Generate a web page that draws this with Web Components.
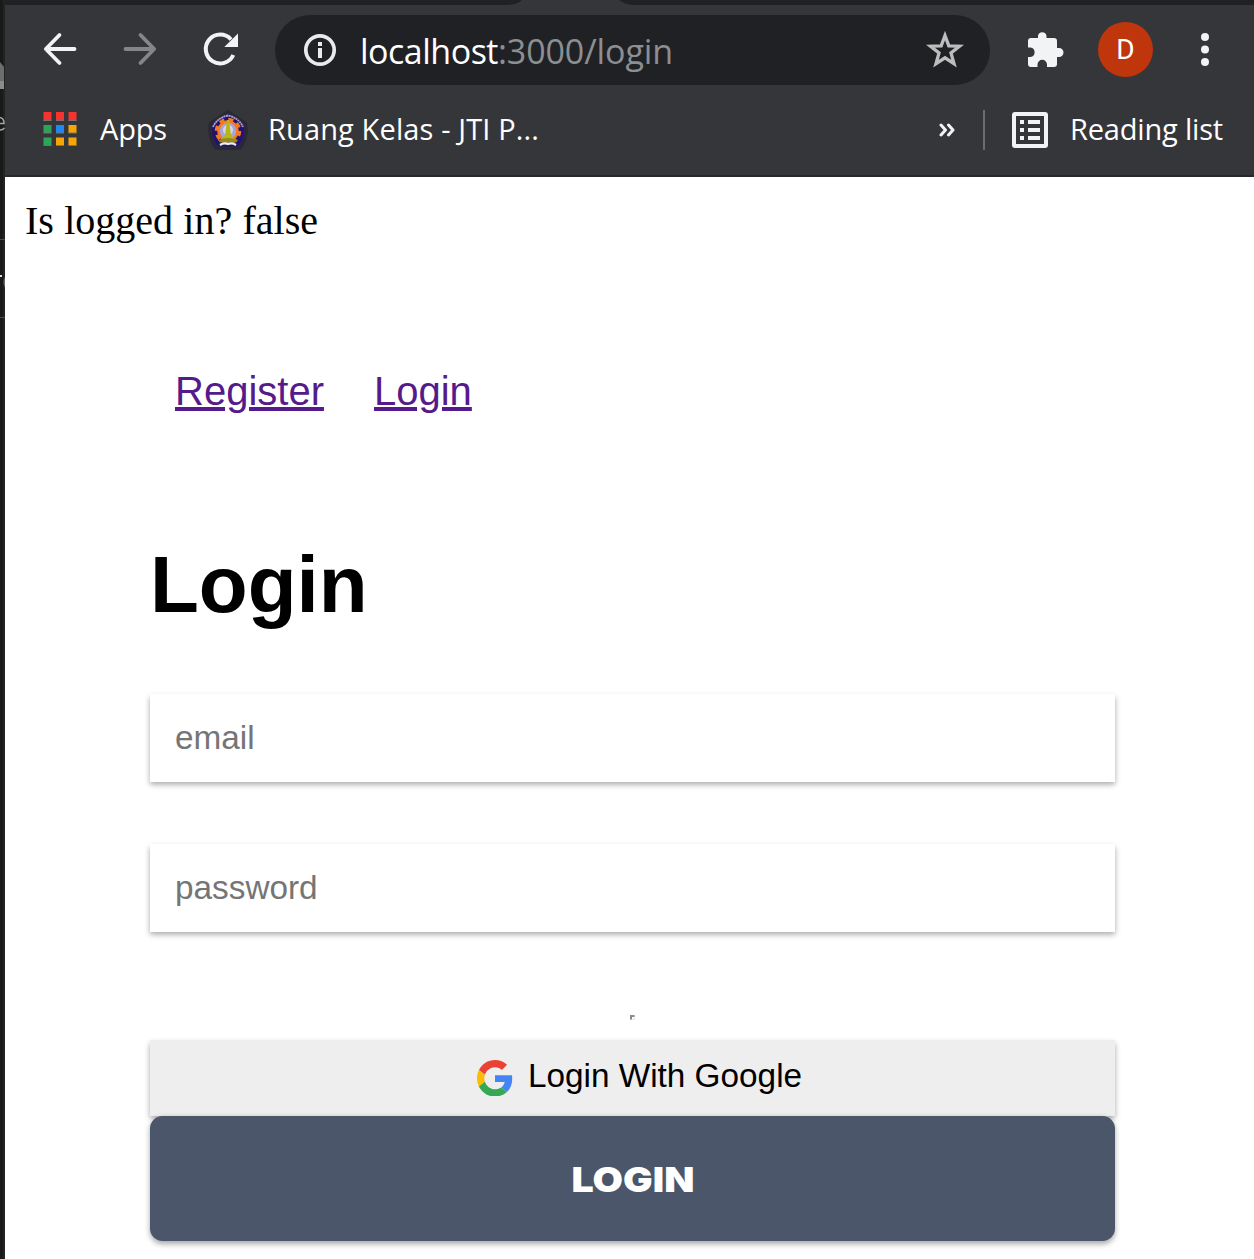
<!DOCTYPE html>
<html lang="en">
<head>
<meta charset="utf-8">
<title>Login</title>
<style>
body{margin:0;background:#fff;overflow:hidden}
</style>
</head>
<body>
<browser-window>
  <browser-toolbar slot="chrome"></browser-toolbar>
  <bookmarks-bar slot="chrome"></bookmarks-bar>
  <login-page></login-page>
</browser-window>
<script>
class BaseElement extends HTMLElement {
  constructor() {
    super();
    this.attachShadow({ mode: 'open' }).innerHTML = this.constructor.markup;
  }
}

// Label whose tracking is spread to fill the width given in its "width" attribute.
class FitLabel extends BaseElement {
  static markup = `<style>
    :host{display:block;flex:none;white-space:pre;font-family:"Open Sans","Noto Sans",sans-serif}
    span{display:inline-block}
  </style><span><slot></slot></span>`;
  connectedCallback() {
    const target = Number(this.getAttribute('width'));
    const span = this.shadowRoot.querySelector('span');
    const natural = span.getBoundingClientRect().width;
    span.style.letterSpacing = ((target - natural) / this.textContent.length).toFixed(3) + 'px';
    this.style.width = target + 'px';
  }
}

class DesktopEdge extends BaseElement {
  static markup = `<style>
    :host{display:block;width:5px;flex:none;height:1259px;overflow:hidden;background:#1c1c1c}
    svg{display:block}
  </style>
  <svg width="5" height="1259">
    <rect width="3" height="1259" fill="#191919"/><rect x="3" width="2" height="1259" fill="#232323"/>
    <path d="M0 62L4 67V89H0z" fill="#6d6d6d"/><path d="M0 81H4V89H0z" fill="#8b8b8b"/>
    <path d="M0 117.500Q4 118 4 123.500H0M0 130Q3 130 4.500 128" fill="none" stroke="#a5a5a5" stroke-width="1.500"/>
    <path d="M0 239.500H5M0 317.500H5" stroke="#4b4b4b"/>
    <rect y="275" width="2" height="2" fill="#ddd"/><path d="M5 277Q2 282 5 288" fill="#666"/>
  </svg>`;
}

class BrowserWindow extends BaseElement {
  static markup = `<style>
    :host{display:flex;width:1254px;height:1259px;overflow:hidden}
    .win{width:1249px;display:flex;flex-direction:column}
    .chrome{background:#35363a;border-bottom:2px solid #28292c;height:175px;flex:none}
    .tabs{display:block;height:5px}
  </style>
  <desktop-edge></desktop-edge>
  <div class="win">
    <div class="chrome">
      <svg class="tabs" width="1249" height="5"><path d="M0 0H517Q512 5 502 5H0zM614 0Q620 5 630 5H1249V0z" fill="#202124"/></svg>
      <slot name="chrome"></slot>
    </div>
    <slot></slot>
  </div>`;
}

class BrowserToolbar extends BaseElement {
  static markup = `<style>
    :host{display:flex;height:90px;align-items:center;box-sizing:border-box;padding-left:35px}
    svg{display:block;flex:none}
    .nav{margin-right:30px}
    .omni{display:flex;align-items:center;width:715px;height:70px;border-radius:35px;background:#202124;box-sizing:border-box;padding:0 25px;margin-right:30px}
    .omni .info{margin:0 20px 0 0}
    .star{margin:0 0 0 auto}
    .url{font-size:34px;line-height:46px;color:#fff;padding-top:1px}
    .path{color:#8c8f91}
    .face{width:55px;height:55px;border-radius:50%;background:#bf360c;color:#fff;font:28px/55px Roboto,sans-serif;text-align:center;margin:-1px 27px 0 28px}
  </style>
  <svg class="nav" width="50" height="50" fill="none" stroke="#f1f3f4" stroke-width="3.800"><path d="M34.500 24H6M19.500 10L5.800 24L19.500 38" stroke-linecap="round" stroke-linejoin="round"/></svg>
  <svg class="nav" width="50" height="50" fill="none" stroke="#85868a" stroke-width="3.800"><path d="M5.500 24H34M20.500 10L34.200 24L20.500 38" stroke-linecap="round" stroke-linejoin="round"/></svg>
  <svg width="50" height="50" style="margin-right:25px"><path d="M33.300 30A14.400 14.400 0 1 1 31 14.500" fill="none" stroke="#f1f3f4" stroke-width="4"/><path d="M38 8.500V22H24.300z" fill="#f1f3f4"/></svg>
  <div class="omni">
    <svg class="info" width="40" height="40"><circle cx="20" cy="20" r="14.200" fill="none" stroke="#e8eaed" stroke-width="3.700"/><path d="M18 12h4v4h-4zM18 18h4v10h-4z" fill="#e8eaed"/></svg>
    <fit-label class="url" width="138">localhost</fit-label><fit-label class="url path" width="175">:3000/login</fit-label>
    <svg class="star" width="40" height="40"><path d="M20 5.500L23.800 15.800L34.500 16.200L26 22.900L29 33.700L20 27.800L11 33.700L14 22.900L5.500 16.200L16.200 15.800z" fill="none" stroke="#bdbdbd" stroke-width="3.300"/></svg>
  </div>
  <svg width="50" height="50" viewBox="0 0 50 50" style="margin-right:0"><path d="M11 13H18V11A4.300 4.300 0 0 1 26.500 11V13H34Q37 13 37 16V23H39A4.500 4.500 0 0 1 39 32H37V39Q37 42 34 42H27V39.500A4.700 4.700 0 0 0 17.500 39.500V42H11Q8 42 8 39V32H10.500A4.800 4.800 0 0 0 10.500 22.500H8V16Q8 13 11 13z" fill="#f1f3f4"/></svg>
  <div class="face">D</div>
  <svg width="50" height="50" fill="#f1f3f4"><circle cx="25" cy="12" r="4"/><circle cx="25" cy="24.500" r="4"/><circle cx="25" cy="37" r="4"/></svg>`;
}

class BookmarksBar extends BaseElement {
  static markup = `<style>
    :host{display:flex;align-items:center;height:70px;padding-left:38px;color:#fff;font-size:29px;line-height:38px}
    svg{display:block;flex:none}
    fit-label{padding-bottom:2px}
    .sep{width:2px;height:40px;background:#6b6c6f;margin:0 27px}
  </style>
  <svg width="34" height="35" style="margin:-1px 23px 0 0">
    <path d="M0.500 0h8v9h-8zM13 0h8v9h-8zM25.500 0h8v9h-8z" fill="#f7322f"/>
    <path d="M.5 13h8v8h-8zM.5 25.500h8v8h-8z" fill="#2ea35a"/><path d="M13 13h8v8h-8z" fill="#1e88f5"/>
    <path d="M25.500 13h8v8h-8zM13 25.500h8v8h-8zM25.500 25.500h8v8h-8z" fill="#f5a606"/>
    <path d="M.5 8.500h8M13 8.500h8M25.500 8.500h8M.5 21h8M13 21h8M25.500 21h8M.5 33.500h8M13 33.500h8M25.500 33.500h8" stroke="#77706c"/>
  </svg>
  <fit-label width="67">Apps</fit-label>
  <svg width="40" height="40" viewBox="0 0 40 40" style="margin:0 20px 0 41px">
    <path d="M20 1L38 13Q41 25 33 38Q20 41 7 38Q-1 25 2 13z" fill="#28264b" stroke="#2b292f" stroke-width="2"/>
    <path d="M20 4L35 14Q38 25 31 35Q20 38 9 35Q2 25 5 14z" fill="#25116f"/>
    <path d="M5 17Q9 8 20 5.500Q31 8 35 17" fill="none" stroke="#aaa4cb" stroke-width="1.800" stroke-dasharray="2 .5"/>
    <circle cx="20" cy="21" r="11.500" fill="none" stroke="#f37a20" stroke-width="3.500" stroke-dasharray="5 4.030"/>
    <circle cx="20" cy="21" r="9.500" fill="#aaa3d7" stroke="#f37a20" stroke-width="2.500"/>
    <circle cx="20" cy="20" r="5" fill="#d7d5ee"/>
    <path d="M19 10h2l2 15 4 4H13l4-4z" fill="#b7b719"/><path d="M10 30Q20 26 30 30L28 32.500H12z" fill="#948a20"/>
    <path d="M12 35Q16 32.500 20 34Q24 32.500 28 35" fill="none" stroke="#eee" stroke-width="2.300"/>
  </svg>
  <fit-label width="271">Ruang Kelas - JTI P...</fit-label>
  <svg width="18" height="16" style="margin:-1px 0 0 400px" fill="none" stroke="#f1f3f4" stroke-width="3"><path d="M2 3L6.500 8L2 13M9.500 3L14 8L9.500 13" stroke-linecap="round" stroke-linejoin="round"/></svg>
  <div class="sep" style="margin-left:26px"></div>
  <svg width="36" height="36" style="margin-right:22px"><rect x="2" y="2" width="32" height="32" rx="1" fill="none" stroke="#f1f3f4" stroke-width="4"/><path d="M8 8h4v4H8zM16 8h12v4H16zM8 16h4v4H8zM16 16h12v4H16zM8 24h4v4H8zM16 24h12v4H16z" fill="#f1f3f4"/></svg>
  <fit-label width="153">Reading list</fit-label>`;
}

class SiteNav extends BaseElement {
  static markup = `<style>
    :host{display:flex;gap:50px;padding:0 25px;font:40px/46px "Liberation Sans",Arial,sans-serif}
    a{color:#551a8b;text-decoration:underline}
  </style><a href="#register">Register</a><a href="#login">Login</a>`;
}

class TextField extends BaseElement {
  static markup = `<style>
    :host{display:block;height:88px;background:#fff;box-shadow:0 2.500px 7.500px rgba(0,0,0,.12),0 2.500px 5px rgba(0,0,0,.24);
      box-sizing:border-box;padding:0 25px;font:33.333px/88px "Liberation Sans",Arial,sans-serif;color:#757575}
  </style><slot></slot>`;
}

class GoogleButton extends BaseElement {
  static markup = `<style>
    :host{display:flex;height:76px;justify-content:center;align-items:center;background:#eee;color:#000;
      box-shadow:0 2.500px 7.500px rgba(0,0,0,.12),0 2.500px 5px rgba(0,0,0,.24);
      font:33.333px/38px "Liberation Sans",Arial,sans-serif;gap:15px;box-sizing:border-box;padding-left:14px}
    svg{display:block}
    span{margin-top:-5px}
  </style>
  <svg width="36" height="36.500" viewBox="0 0 48 48" preserveAspectRatio="none">
    <path fill="#EA4335" d="M24 9.500c3.540 0 6.710 1.220 9.210 3.600l6.850-6.850C35.900 2.380 30.470 0 24 0 14.620 0 6.510 5.380 2.560 13.220l7.980 6.190C12.430 13.720 17.740 9.500 24 9.500z"/>
    <path fill="#4285F4" d="M46.980 24.550c0-1.570-.15-3.090-.38-4.550H24v9.020h12.940c-.58 2.960-2.260 5.480-4.780 7.180l7.730 6c4.510-4.180 7.090-10.360 7.090-17.650z"/>
    <path fill="#FBBC05" d="M10.530 28.590c-.48-1.450-.76-2.990-.76-4.590s.27-3.140.76-4.590l-7.980-6.190C.92 16.460 0 20.120 0 24c0 3.880.92 7.540 2.560 10.780l7.970-6.190z"/>
    <path fill="#34A853" d="M24 48c6.480 0 11.930-2.130 15.890-5.810l-7.730-6c-2.150 1.450-4.920 2.300-8.160 2.300-6.260 0-11.570-4.220-13.470-9.910l-7.980 6.190C6.510 42.620 14.620 48 24 48z"/>
  </svg><span><slot></slot></span>`;
}

class SubmitButton extends BaseElement {
  static markup = `<style>
    :host{display:flex;height:125px;justify-content:center;align-items:center;background:#4b566a;color:#fff;border-radius:12.500px;
      box-shadow:0 2.500px 7.500px rgba(0,0,0,.12),0 2.500px 5px rgba(0,0,0,.24);position:relative}
    span{font:900 34.500px/42px Inter,sans-serif;padding-top:2px;transform:scaleX(1.140)}
  </style><span><slot></slot></span>`;
}

class LoginPage extends BaseElement {
  static markup = `<style>
    :host{display:block;flex:1;background:#fff}
    .status{font:40px/46px "Liberation Serif","Times New Roman",serif;color:#000;padding:21px 20px 0;word-spacing:.3px}
    main{display:flex;flex-direction:column;margin:124px 139px 0 145px}
    h1{margin:125px 0 63px;font:bold 80px/92px "Liberation Sans",Arial,sans-serif;color:#000}
    text-field+text-field{margin-top:62px}
    .broken{display:block;margin:83px auto 20px 480px}
  </style>
  <div class="status">Is logged in? false</div>
  <main>
    <site-nav></site-nav>
    <h1>Login</h1>
    <text-field>email</text-field>
    <text-field>password</text-field>
    <svg class="broken" width="5" height="5"><path d="M0 0H4V2H2V4H0z" fill="#8a8a8a"/><path d="M4 0H5V2H4zM0 4H2V5H0z" fill="#bbb"/><path d="M4 2H5V5H2V4H4z" fill="#e8e8e8"/></svg>
    <google-button>Login With Google</google-button>
    <submit-button>LOGIN</submit-button>
  </main>`;
}

customElements.define('fit-label', FitLabel);
customElements.define('desktop-edge', DesktopEdge);
customElements.define('site-nav', SiteNav);
customElements.define('text-field', TextField);
customElements.define('google-button', GoogleButton);
customElements.define('submit-button', SubmitButton);
customElements.define('browser-toolbar', BrowserToolbar);
customElements.define('bookmarks-bar', BookmarksBar);
customElements.define('login-page', LoginPage);
customElements.define('browser-window', BrowserWindow);
</script>
</body>
</html>
